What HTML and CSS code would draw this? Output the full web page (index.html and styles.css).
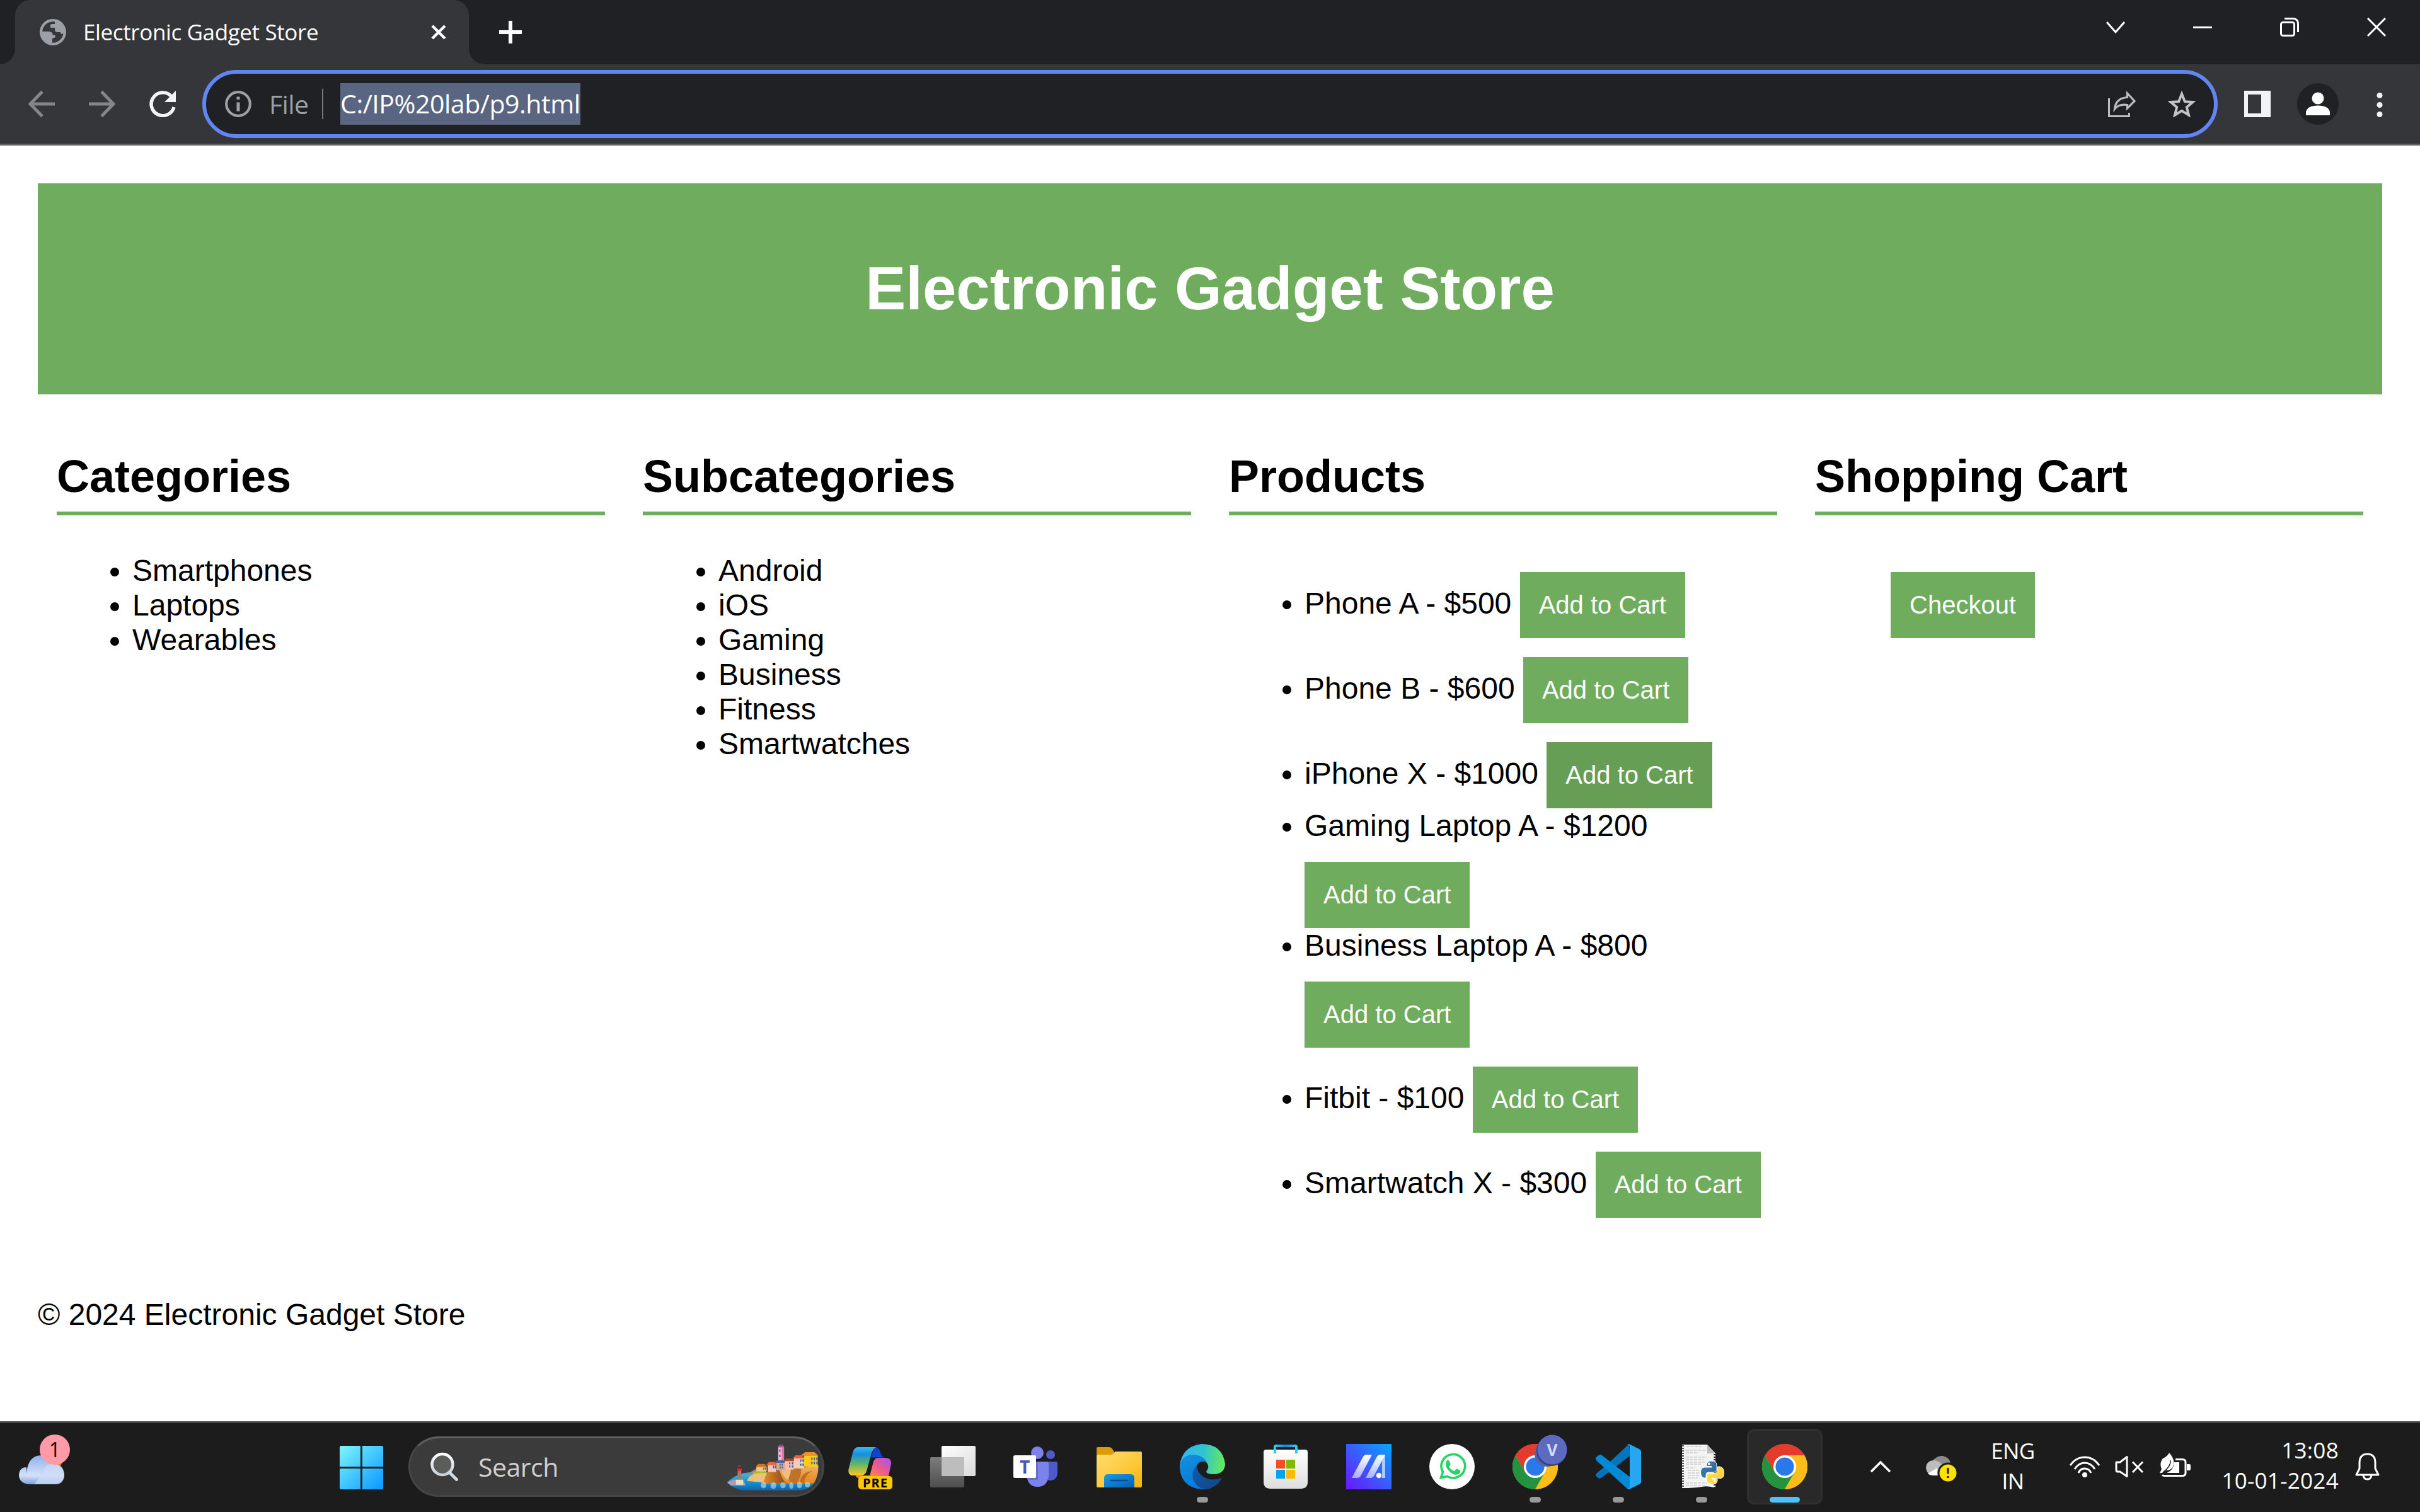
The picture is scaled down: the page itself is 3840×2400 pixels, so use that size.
FILE: index.html
```html
<!DOCTYPE html>
<html lang="en">
<head>
<meta charset="utf-8">
<title>Electronic Gadget Store</title>
<link rel="stylesheet" href="styles.css">
</head>
<body>
<svg class="defs" width="0" height="0" aria-hidden="true">
  <defs>
    <linearGradient id="win" x1="0" y1="0" x2="1" y2="1"><stop offset="0" stop-color="#7df6ff"/><stop offset="1" stop-color="#0a96ff"/></linearGradient>
    <linearGradient id="cloud" x1="0" y1="0" x2="0" y2="1"><stop offset="0" stop-color="#8fb1ee"/><stop offset=".7" stop-color="#d3e1f7"/><stop offset="1" stop-color="#7f9fe0"/></linearGradient>
    <linearGradient id="lens" x1="0" y1="0" x2="0" y2="1"><stop offset="0" stop-color="#fff"/><stop offset="1" stop-color="#c5d0da"/></linearGradient>
    <linearGradient id="sea" x1="0" y1="0" x2="0" y2="1"><stop offset="0" stop-color="#2fc4e4"/><stop offset="1" stop-color="#0562b4"/></linearGradient>
    <linearGradient id="cliff" x1="0" y1="0" x2="0" y2="1"><stop offset="0" stop-color="#e9b06e"/><stop offset="1" stop-color="#e8871b"/></linearGradient>
    <linearGradient id="cliffDark" x1="0" y1="0" x2="1" y2="0"><stop offset="0" stop-color="#e58c28"/><stop offset="1" stop-color="#8d4d1c"/></linearGradient>
    <linearGradient id="copA" x1="0" y1="0" x2="0" y2="1"><stop offset="0" stop-color="#3cb6f5"/><stop offset=".25" stop-color="#1590dc"/><stop offset=".55" stop-color="#52b276"/><stop offset="1" stop-color="#fcc91a"/></linearGradient>
    <linearGradient id="copB" x1="1" y1="0" x2="0" y2="1"><stop offset="0" stop-color="#9a57f5"/><stop offset=".5" stop-color="#ea5793"/><stop offset="1" stop-color="#ff8450"/></linearGradient>
    <linearGradient id="tvA" x1="0" y1="0" x2="1" y2="1"><stop offset="0" stop-color="#fff"/><stop offset="1" stop-color="#dadada"/></linearGradient>
    <linearGradient id="tvB" x1="0" y1="0" x2="0" y2="1"><stop offset="0" stop-color="#7d7d7d"/><stop offset="1" stop-color="#4e4e4e"/></linearGradient>
    <linearGradient id="folder" x1="0" y1="0" x2="1" y2="1"><stop offset="0" stop-color="#ffdd72"/><stop offset=".6" stop-color="#fdc838"/><stop offset="1" stop-color="#f5b20a"/></linearGradient>
    <linearGradient id="folderBlue" x1="0" y1="0" x2="1" y2="1"><stop offset="0" stop-color="#189be6"/><stop offset="1" stop-color="#0460b4"/></linearGradient>
    <linearGradient id="edgeTop" x1="0" y1=".4" x2="1" y2=".5"><stop offset="0" stop-color="#38b6f6"/><stop offset=".5" stop-color="#2ec3cf"/><stop offset="1" stop-color="#69ea5b"/></linearGradient>
    <linearGradient id="edgeLow" x1="0" y1="0" x2=".5" y2="1"><stop offset="0" stop-color="#1690dd"/><stop offset="1" stop-color="#0479d8"/></linearGradient>
    <linearGradient id="edgeDark" x1="0" y1="0" x2="1" y2="1"><stop offset="0" stop-color="#0b5cb0"/><stop offset="1" stop-color="#174482"/></linearGradient>
    <linearGradient id="store" x1="0" y1="0" x2="0" y2="1"><stop offset="0" stop-color="#fff"/><stop offset="1" stop-color="#dedede"/></linearGradient>
    <linearGradient id="handle" x1="0" y1="0" x2="1" y2="0"><stop offset="0" stop-color="#2bcdf8"/><stop offset=".5" stop-color="#1286e0"/><stop offset="1" stop-color="#2bcdf8"/></linearGradient>
    <linearGradient id="asus" x1="1" y1="0" x2="0" y2="1"><stop offset="0" stop-color="#04a8ff"/><stop offset=".5" stop-color="#3a5cff"/><stop offset="1" stop-color="#6a16ff"/></linearGradient>
    <linearGradient id="asusBar" x1="0" y1="0" x2="0" y2="1"><stop offset="0" stop-color="#fff"/><stop offset="1" stop-color="#fff" stop-opacity=".55"/></linearGradient>
    <linearGradient id="pyBlue" x1="0" y1="0" x2="1" y2="1"><stop offset="0" stop-color="#3d7fb8"/><stop offset="1" stop-color="#2f6594"/></linearGradient>
    <linearGradient id="pyYellow" x1="0" y1="0" x2="1" y2="1"><stop offset="0" stop-color="#ffe55c"/><stop offset="1" stop-color="#ffc92c"/></linearGradient>
    <clipPath id="bay"><path d="M40 253Q85 208 150 205L390 60H478V170Q474 290 385 291H130Q75 290 40 253Z"/></clipPath>
    <symbol id="chrome" viewBox="0 0 72 72">
      <circle cx="36" cy="36" r="36" fill="#f9bc15"/>
      <path d="M36 36L4.800 18A36 36 0 0 1 67.200 18H36Z" fill="#e33b2e"/>
      <path d="M20.400 45L4.800 18A36 36 0 0 0 36 72L51.600 45Z" fill="#23933f"/>
      <path d="M36 18H67.200A36 36 0 0 1 36 72L51.600 45Z" fill="#fbbd1a"/>
      <path d="M4.800 18L20.400 45L36 36V18Z" fill="#e33b2e"/>
      <circle cx="36" cy="36" r="18" fill="#fff"/><circle cx="36" cy="36" r="14.600" fill="#2b78ea"/>
    </symbol>
  </defs>
</svg>

<header class="browser">
  <div class="tabstrip">
    <div class="tab">
      <svg class="favicon" viewBox="0 0 42 42"><circle cx="21" cy="21" r="21" fill="#9aa0a6"/><path d="M24 4.500A17 17 0 0 0 4.200 20H14Q21 20 21 26H25Q25 31 20 31V36Q18 38 22 37.800A17 17 0 0 0 37.500 23Q35 25 33 23V21H28Q24 21 24 17V14H17V10Q17 8 20 8H24Z" fill="#35363a"/></svg>
      <span class="tab-title">Electronic Gadget Store</span>
      <svg class="tab-close" viewBox="0 0 24 24"><path d="M2 2L22 22M22 2L2 22" stroke="#fff" stroke-width="4.500"/></svg>
    </div>
    <svg class="new-tab" viewBox="0 0 36 36"><path d="M18 0V36M0 18H36" stroke="#fff" stroke-width="6"/></svg>
    <div class="window-controls">
      <svg viewBox="0 0 30 30"><path d="M1 7L15 23L29 7" fill="none" stroke="#fff" stroke-width="3"/></svg>
      <svg viewBox="0 0 30 30"><path d="M0 15.500H30" stroke="#fff" stroke-width="3"/></svg>
      <svg viewBox="0 0 30 30"><rect x="1.500" y="7.500" width="21" height="21" rx="3" fill="none" stroke="#fff" stroke-width="3"/><path d="M7 1.500H20Q28.500 1.500 28.500 10V23" fill="none" stroke="#fff" stroke-width="3"/></svg>
      <svg viewBox="0 0 30 30"><path d="M1 1L29 29M29 1L1 29" stroke="#fff" stroke-width="3"/></svg>
    </div>
  </div>
  <div class="toolbar">
    <svg class="nav" viewBox="0 0 42 42"><path d="M42 21H4M22 1.500L3 21L22 40.500" fill="none" stroke="#85868a" stroke-width="5"/></svg>
    <svg class="nav" viewBox="0 0 42 42"><path d="M0 21H38M20 1.500L39 21L20 40.500" fill="none" stroke="#85868a" stroke-width="5"/></svg>
    <svg class="nav" viewBox="0 0 42 42"><path d="M34.500 8.500A18.300 18.300 0 1 0 39 26" fill="none" stroke="#f1f3f4" stroke-width="5.400"/><path d="M42 0V18H24Z" fill="#f1f3f4"/></svg>
    <div class="omnibox">
      <svg class="info" viewBox="0 0 42 42"><circle cx="21" cy="21" r="18.800" fill="none" stroke="#9aa0a6" stroke-width="4.200"/><path d="M21 18.500V32.500M21 9.500V14" stroke="#9aa0a6" stroke-width="5"/></svg>
      <span class="scheme">File</span>
      <span class="divider"></span>
      <span class="url">C:/IP%20lab/p9.html</span>
      <svg class="share" viewBox="0 0 44 42"><path d="M1.500 12V40.500H33.500V35" fill="none" stroke="#bdbdbd" stroke-width="3"/><path d="M30.500 4L42 16.500L30.500 28V22.500Q17 20.500 10.500 29Q12 12 30.500 10.500Z" fill="none" stroke="#bdbdbd" stroke-width="3.200"/></svg>
      <svg class="star" viewBox="0 0 44 42"><path d="M22 5L26.800 17.200L39.500 18L29.800 26.300L33 38.600L22 31.800L11 38.600L14.200 26.300L4.500 18L17.200 17.200Z" fill="none" stroke="#c3c3c3" stroke-width="4"/></svg>
    </div>
    <svg class="panel" viewBox="0 0 42 42"><path d="M0 0H42V42H0ZM6 6V36H27V6Z" fill="#f1f3f4" fill-rule="evenodd"/></svg>
    <svg class="avatar" viewBox="0 0 66 66"><circle cx="33" cy="33" r="33" fill="#202124"/><circle cx="33" cy="24" r="9.500" fill="#fff"/><path d="M14 51V46Q16 35.500 33 35.500T52 46V51Z" fill="#fff"/></svg>
    <svg class="menu" viewBox="0 0 10 42"><g fill="#f1f3f4"><circle cx="5" cy="7.500" r="4.500"/><circle cx="5" cy="22.500" r="4.500"/><circle cx="5" cy="37.500" r="4.500"/></g></svg>
  </div>
</header>

<main class="page">
  <header class="banner"><h1>Electronic Gadget Store</h1></header>
  <div class="columns">
    <section class="column">
      <h2>Categories</h2>
      <ul><li>Smartphones</li><li>Laptops</li><li>Wearables</li></ul>
    </section>
    <section class="column">
      <h2>Subcategories</h2>
      <ul><li>Android</li><li>iOS</li><li>Gaming</li><li>Business</li><li>Fitness</li><li>Smartwatches</li></ul>
    </section>
    <section class="column">
      <h2>Products</h2>
      <ul>
        <li>Phone A - $500 <button>Add to Cart</button></li>
        <li>Phone B - $600 <button>Add to Cart</button></li>
        <li>iPhone X - $1000 <button class="hovered">Add to Cart</button></li>
        <li>Gaming Laptop A - $1200 <button>Add to Cart</button></li>
        <li>Business Laptop A - $800 <button>Add to Cart</button></li>
        <li>Fitbit - $100 <button>Add to Cart</button></li>
        <li>Smartwatch X - $300 <button>Add to Cart</button></li>
      </ul>
    </section>
    <section class="column">
      <h2>Shopping Cart</h2>
      <ul><button>Checkout</button></ul>
    </section>
  </div>
  <footer><p>© 2024 Electronic Gadget Store</p></footer>
</main>

<nav class="taskbar">
  <div class="weather">
    <svg viewBox="0 0 72 72"><circle cx="52" cy="22" r="17" fill="#f07a0c"/><path d="M34 22Q34 14 40 10L44 22Z" fill="#f9bd2c"/><path d="M12 44Q14 15 36 15Q50 15 55 28Q72 32 72 48Q70 61 58 61H14Q0 58 0 46Q1 34 12 34Z" fill="url(#cloud)"/><path d="M40 42Q40 28 57 28Q71 30 72 46Q70 61 57 61H24" fill="#cfdef8" opacity=".7"/></svg>
    <span class="weather-badge">1</span>
  </div>
  <div class="task start"><svg viewBox="0 0 69 69"><path d="M2 0H33V33H0V2Q0 0 2 0ZM36 0H67Q69 0 69 2V33H36ZM0 36H33V69H2Q0 69 0 67ZM36 36H69V67Q69 69 67 69H36Z" fill="url(#win)"/></svg></div>
  <div class="search">
    <svg class="lens" viewBox="0 0 44 46"><circle cx="19" cy="19.500" r="16.500" fill="#5c5c5c" stroke="url(#lens)" stroke-width="4.500"/><path d="M30 32L41.500 43.500" stroke="#d3dbe2" stroke-width="4.800" stroke-linecap="round"/></svg>
    <span>Search</span>
    <svg class="art" viewBox="40 60 440 235">
      <g clip-path="url(#bay)">
        <path d="M40 205H480V295H40Z" fill="url(#sea)"/>
        <path d="M108 206L150 190L185 185V215H115Z" fill="#8c87ab"/>
        <path d="M40 253L70 240H110L130 262L125 268H60Z" fill="#b29cb5"/>
        <path d="M135 245Q150 212 190 208L260 205V256Q170 250 135 245Z" fill="#edc07c"/>
        <path d="M212 258L230 205L330 190L480 172V258Z" fill="url(#cliff)"/>
        <path d="M212 257L232 206L292 196Q300 230 322 257Z" fill="url(#cliffDark)"/>
        <path d="M345 190L395 184Q398 225 372 257H350Q325 240 345 190Z" fill="#bb7428"/>
        <path d="M300 194L345 188Q348 215 328 240Q305 220 300 194Z" fill="#efbd80"/>
        <path d="M390 250Q395 205 450 198Q415 212 408 257Z" fill="#c46b1c"/>
        <g fill="#fff" opacity=".45"><ellipse cx="215" cy="266" rx="13" ry="15"/><ellipse cx="262" cy="268" rx="14" ry="16"/><ellipse cx="308" cy="266" rx="13" ry="15"/><ellipse cx="348" cy="268" rx="10" ry="16"/><ellipse cx="387" cy="266" rx="12" ry="15"/><ellipse cx="425" cy="264" rx="12" ry="12"/></g>
        <path d="M162 213Q165 198 195 196H225L229 206Q195 207 162 213Z" fill="#a5c51c"/>
      </g>
      <path d="M285 85H313V150H285Z" fill="#f6b8d4"/><path d="M302 85H313V150H302Z" fill="#e26fa5"/><path d="M282 85L292 73H305L314 85Z" fill="#cf5f92"/><circle cx="299" cy="75" r="6" fill="#5546a5"/>
      <path d="M181 178H230V200H181Z" fill="#f1c98e"/><path d="M177 179L190 165H220L232 179Z" fill="#cf791c"/>
      <path d="M235 168H275V203H235Z" fill="#f9c7b8"/><path d="M228 170L240 155H270L281 170Z" fill="#ee6340"/>
      <path d="M276 158H316V195H276Z" fill="#dba68b"/><path d="M268 158L280 147H308L318 158Z" fill="#3768ad"/>
      <path d="M316 150H360V192H316Z" fill="#f8bdb0"/><path d="M309 151L322 139H352L364 151Z" fill="#a44d2c"/>
      <path d="M360 137H408V186H360Z" fill="#fbcabb"/><path d="M354 138L367 123H398L410 138Z" fill="#ed6039"/>
      <path d="M408 124H474V178H408Z" fill="#fccb1c"/><path d="M392 125L414 108H458L474 122V125Z" fill="#ea912b"/>
      <g fill="#35659b"><path d="M290 95h6v12h-6zM290 120h6v12h-6zM214 182h5v10h-5zM222 182h5v10h-5zM260 172h6v14h-6zM270 172h6v14h-6zM292 163h5v9h-5zM302 163h5v9h-5zM292 177h5v9h-5zM302 177h5v9h-5zM337 157h6v9h-6zM350 157h6v9h-6zM337 172h6v9h-6zM350 172h6v9h-6zM390 143h6v11h-6zM401 143h6v11h-6zM390 163h6v11h-6zM401 163h6v11h-6zM443 134h6v12h-6zM455 134h6v12h-6zM467 134h6v12h-6zM443 154h6v12h-6zM455 154h6v12h-6zM467 154h6v12h-6z"/></g>
      <path d="M92 195H108L111 245H89Z" fill="#a47a70"/><path d="M90 185H111V198H90Z" fill="#e5202b"/><path d="M94 175H107V187H94Z" fill="#403a45"/><path d="M92 177Q99 165 109 177Z" fill="#e5202b"/><path d="M83 240H118V264H83Z" fill="#eddcc4"/>
    </svg>
  </div>
  <div class="apps">
    <div class="task"><svg viewBox="0 0 72 72"><path d="M44 5Q50 5 53 13Q55 21 60 21.500H38Z" fill="#1044cc"/><path d="M14 50H37L36 54H18Q14 54 14 50Z" fill="#f4714f"/><path d="M50 22H62Q72 23 69.500 34L66 51H36L42 28Q44 22 50 22Z" fill="url(#copB)"/><path d="M18 5H46Q41 7 38 18L31 43Q29 50 22 50H8Q1 49 2.500 40L9 14Q11 5 18 5Z" fill="url(#copA)"/><rect x="18" y="51" width="54" height="21" rx="5" fill="#ffc800"/></svg><b class="pre">PRE</b></div>
    <div class="task"><svg viewBox="0 0 72 72"><rect x="18" y="3" width="54" height="48" rx="2" fill="url(#tvA)"/><rect y="21" width="54" height="48" rx="2" fill="url(#tvB)"/><path d="M18 21H54V51H18Z" fill="#bdbdbd"/></svg></div>
    <div class="task"><svg viewBox="0 0 72 72"><circle cx="38" cy="14" r="10" fill="#7b83eb"/><circle cx="59" cy="17" r="7" fill="#5059c9"/><path d="M50 28H68Q70 28 70 30V46Q69 58 58 58Q52 58 50 52Z" fill="#5059c9"/><path d="M21 28H53Q56 28 56 31V50Q54 68 38.500 68T21 50Z" fill="#7b83eb"/><path d="M24 28H39V57H24Z" fill="#5a62bb" opacity=".6"/><rect y="18" width="36" height="36" rx="2.500" fill="#fff"/></svg><b class="teams-t">T</b></div>
    <div class="task"><svg viewBox="0 0 72 72"><path d="M0 7Q0 5 2 5H20Q23 5 25 8L29 14V24H0Z" fill="#dd9c03"/><path d="M0 20Q0 17 3 17H22Q26 17 28 14T32 12H70Q72 12 72 14V67Q72 69 70 69H2Q0 69 0 67Z" fill="url(#folder)"/><path d="M12 69V54Q12 48 18 48H54Q60 48 60 54V69Z" fill="url(#folderBlue)"/><path d="M22 58H49" stroke="#0c4a8c" stroke-width="2.500" stroke-linecap="round"/></svg></div>
    <div class="task running"><svg viewBox="0 0 72 72"><path d="M0 34Q4 4 34 0Q68 0 72 32Q71 48 53 48Q43 48 42 44Q48 36 43 30Q36 22 20 24Q6 26 0 40Z" fill="url(#edgeTop)"/><path d="M0 37Q2 18 20 17Q36 17 43 29Q29 24 26 38Q24 54 50 70Q44 72 36 72Q2 70 0 37Z" fill="url(#edgeLow)"/><path d="M27 34Q14 48 26 64Q32 72 42 71.500Q60 69 66.500 54Q50 60 37 52Q27 44 27 34Z" fill="url(#edgeDark)"/></svg></div>
    <div class="task"><svg viewBox="0 0 72 72"><path d="M5 9H67Q71 9 71 13V60Q71 71 60 71H12Q1 71 1 60V13Q1 9 5 9Z" fill="url(#store)"/><path d="M19 15V5Q19 3 21 3H51Q53 3 53 5V15" fill="none" stroke="url(#handle)" stroke-width="4"/><path d="M21 25h14v14h-14z" fill="#f34f24"/><path d="M37 25h14v14h-14z" fill="#7fb900"/><path d="M21 41h14v14h-14z" fill="#03a3ef"/><path d="M37 41h14v14h-14z" fill="#feb902"/></svg></div>
    <div class="task"><svg viewBox="0 0 72 72"><path d="M0 0H72V72H0Z" fill="url(#asus)"/><path d="M57 17H62V54H57Z" fill="#a9ccff"/><path d="M9 54L27 20Q29 17 32 17H41L23 51Q21 54 18 54ZM31 54L49 20Q51 17 54 17H62L44 51Q42 54 39 54Z" fill="url(#asusBar)"/><circle cx="52" cy="50" r="4.200" fill="#fff"/></svg></div>
    <div class="task"><svg viewBox="0 0 72 72"><circle cx="36" cy="36" r="36" fill="#fff"/><path d="M18.500 53.500L21.500 44.500A18.800 18.800 0 1 1 28.500 51.500Z" fill="none" stroke="#25d366" stroke-width="3.600"/><path d="M28 26Q31 25 32 28L33.500 32Q33.500 34 31 36Q35 42 40 43Q42 39 44 39.500L49 42Q50 46 46 48Q39 51 31.500 43Q23 35 27.500 27Z" fill="#25d366"/></svg></div>
    <div class="task running"><svg viewBox="0 0 72 72"><use href="#chrome"/><circle cx="55" cy="16" r="20" fill="#5361b4"/><circle cx="62" cy="11" r="24" fill="#374080"/><circle cx="63" cy="9" r="23.500" fill="#5c6bc0"/></svg><b class="profile">V</b></div>
    <div class="task running"><svg viewBox="0 0 72 72"><path d="M53 0L15 35.500L3 45Q0 48 0 50Q3 54 6 55L10 53L54 19Z" fill="#0475bc"/><path d="M7 17Q3 18 0 22Q-1 25 3 28L50 71Q52 73 55 71V53L10 18Q9 17 7 17Z" fill="#0489d6"/><path d="M50 1Q52 0 54 .5L69 8Q72 9.500 72 12V60Q72 63 69 64L54 71.500Q51 72 50 70Q54 71 54 67V5Q54 1 50 1Z" fill="#25a7f2"/></svg></div>
    <div class="task running"><svg viewBox="0 0 72 72"><path d="M5 1H45L58 15V70Q48 66 36 68T5 70Z" fill="#f3f3f3"/><path d="M45 1L58 15H45Z" fill="#bdbdbd"/><path d="M6.500 2V70M56.500 16V70" stroke="#252525" stroke-width="2.500" stroke-dasharray="2 2"/><path d="M12 4h26M11 10h32M11 14h20M11 21h34M11 25h28M11 29h32M11 32h24M11 38h14M14 42h20M14 46h20M14 50h18M14 54h16M11 62h34M11 66h30" stroke="#bcbcbc" stroke-width="1.200" stroke-dasharray="5 1.500"/><path d="M52 27Q60 27 60 33V41Q60 45 56 45H47Q43 45 43 49V54H40Q34.500 52 34.500 45T40 37H52V35.500H44V33Q44 27 52 27Z" fill="url(#pyBlue)" stroke="#fff" stroke-width="1"/><path d="M54 63.500Q44 63.500 44 57V50Q44 46.500 48 46.500H57Q61.500 46 61.500 42V36H65Q71.500 37 71.500 46T65 54.500H53V56H61V58Q61 63.500 54 63.500Z" fill="url(#pyYellow)" stroke="#fff" stroke-width="1"/><circle cx="47.800" cy="31.500" r="2" fill="#fff"/><circle cx="57" cy="58.500" r="2" fill="#fff"/></svg></div>
    <div class="task running active"><svg viewBox="0 0 72 72"><use href="#chrome"/></svg></div>
  </div>
  <div class="tray">
    <svg class="t-chevron" viewBox="0 0 34 20"><path d="M2 18L17 3L32 18" fill="none" stroke="#fff" stroke-width="3.500"/></svg>
    <svg class="t-drive" viewBox="0 0 49 42"><path d="M10 9Q18 0 27 1Q36 3 39 11L24 22Z" fill="#8b8b8b"/><path d="M0 20Q1 8 13 8Q20 9 24 13L30 18L22 32H12Q1 30 0 20Z" fill="#bcbcbc"/><path d="M3 29L18 20V32H12Q6 32 3 29Z" fill="#fff"/><circle cx="35" cy="28" r="16.500" fill="#1c1c1c"/><circle cx="35" cy="28" r="13.500" fill="#fbe100"/><path d="M35 20V29.500M35 33V36" stroke="#222" stroke-width="3.200"/></svg>
    <div class="lang">ENG<br>IN</div>
    <svg class="t-wifi" viewBox="0 0 50 36"><g fill="none" stroke="#fff" stroke-width="3"><path d="M2 16Q11 3 25 3T48 16"/><path d="M9 22Q15 12 25 12T41 22"/><path d="M15 28Q18 21 25 21T35 28"/></g><circle cx="25" cy="31" r="4" fill="#fff"/></svg>
    <svg class="t-sound" viewBox="0 0 48 36"><path d="M3 11H9L20 2.500V33.500L9 26H5Q3 26 3 23Z" fill="none" stroke="#fff" stroke-width="3" stroke-linejoin="round"/><path d="M29 10.500L45 27M45 10.500L29 27" stroke="#fff" stroke-width="3"/></svg>
    <svg class="t-battery" viewBox="0 0 50 40"><path d="M15 1Q24 11 22 20Q20 29 10 29Q4 34 0 33L3 27Q-1 17 5 10Q12 7 15 1Z" fill="#fff"/><path d="M17 13Q18 23 5 32" fill="none" stroke="#1c1c1c" stroke-width="1.500"/><path d="M25 11.500H36Q41 11.500 41 16V33Q41 37.500 36 37.500H8Q5 37.500 4 36" fill="none" stroke="#fff" stroke-width="3"/><path d="M23 16H31V33H11Q22 29 23 16ZM43 19H47Q49 19 49 21V27Q49 29 47 29H43Z" fill="#fff"/></svg>
    <div class="clock">13:08<br>10-01-2024</div>
    <svg class="t-bell" viewBox="0 0 41 44"><path d="M8 16Q8 2 20.500 2T33 16V25L38 35H3L8 25Z" fill="none" stroke="#fff" stroke-width="3" stroke-linejoin="round"/><path d="M14 36Q15 42 20.500 42T27 36" fill="none" stroke="#fff" stroke-width="3"/></svg>
  </div>
</nav>
</body>
</html>
```
FILE: styles.css
```css
* { box-sizing: border-box; }
body {
  margin: 0;
  width: 3840px;
  height: 2400px;
  overflow: hidden;
  display: flex;
  flex-direction: column;
  background: #fff;
  color: #000;
  font: 48px/55px "Liberation Sans", Arial, sans-serif;
}
svg { display: block; flex: none; }
.defs { position: absolute; }

/* Browser frame */
.browser { height: 231px; background: #35363a; border-bottom: 3px solid #5f6066; font-family: "Open Sans", "Noto Sans", sans-serif; flex: none; }
.tabstrip { height: 102px; background: #202124; display: flex; align-items: center; padding-left: 24px; }
.tab { position: relative; width: 720px; height: 102px; padding: 0 36px 0 39px; background: #35363a; border-radius: 24px 24px 0 0; display: flex; align-items: center; }
.tab::before, .tab::after { content: ""; position: absolute; bottom: 0; width: 24px; height: 24px; }
.tab::before { left: -24px; background: radial-gradient(circle at 0 0, transparent 23.5px, #35363a 24px); }
.tab::after { right: -24px; background: radial-gradient(circle at 100% 0, transparent 23.5px, #35363a 24px); }
.favicon { width: 42px; height: 42px; }
.tab-title { flex: 1; margin-left: 27px; padding-bottom: 2px; color: #fff; font-size: 35px; letter-spacing: -0.38px; white-space: nowrap; }
.tab-close { width: 24px; height: 24px; }
.new-tab { width: 36px; height: 36px; margin-left: 48px; }
.window-controls { margin-left: auto; margin-right: 54px; display: flex; gap: 108px; transform: translateY(-8px); }
.window-controls svg { width: 30px; height: 30px; }
.toolbar { height: 126px; display: flex; align-items: center; padding-left: 45px; }
.nav { width: 42px; height: 42px; margin-right: 54px; }
.nav:nth-of-type(3) { margin-right: 42px; }
.omnibox { width: 3198px; height: 108px; border: 6px solid #6285f1; border-radius: 54px; background: #202124; display: flex; align-items: center; padding: 0 29px 0 30px; font-size: 41px; }
.info { width: 42px; height: 42px; }
.scheme { margin-left: 28px; width: 84px; color: #9aa0a6; letter-spacing: -0.6px; }
.divider { width: 2px; height: 48px; background: #75777b; }
.url { margin-left: 27px; height: 66px; width: 381px; line-height: 64px; background: #5a6582; color: #fff; letter-spacing: -0.45px; white-space: nowrap; }
.share { width: 44px; height: 42px; margin-left: auto; }
.star { width: 44px; height: 42px; margin-left: 51px; }
.panel { width: 42px; height: 42px; margin-left: 42px; }
.avatar { width: 66px; height: 66px; margin-left: 42px; }
.menu { width: 10px; height: 42px; margin-left: 60px; }

/* Store page */
.page { flex: 1; padding: 60px; min-height: 0; }
.banner { background: #6fac5d; color: #fff; text-align: center; padding: 48px; }
h1 { margin: 64.32px 0; font-size: 96px; line-height: 110px; }
.columns { display: grid; grid-template-columns: repeat(4, 1fr); }
.column { padding: 30px; }
h2 { margin: 59.76px 0; padding-bottom: 15px; font-size: 72px; line-height: 82px; border-bottom: 6px solid #6fac5d; }
ul { margin: 48px 0; padding-left: 120px; }
h2 + ul { margin-top: 0; }
button { margin: 30px 0 0; padding: 30px; border: 0; border-radius: 0; background: #6fac5d; color: #fff; font: 40px/45px "Liberation Sans", Arial, sans-serif; }
.hovered { background: #669e55; }
footer p { margin: 48px 0; }

/* Taskbar */
.taskbar { height: 144px; flex: none; background: #1c1c1c; box-shadow: inset 0 3px 0 #444; display: flex; align-items: center; font-family: "Open Sans", "Noto Sans", sans-serif; color: #fff; }
.weather { position: relative; width: 513px; padding-left: 30px; }
.weather svg { width: 72px; height: 72px; margin-top: 5px; }
.weather-badge { position: absolute; left: 63px; top: -13px; width: 48px; height: 48px; border-radius: 50%; background: #ff9aa6; color: #000; font-size: 32px; line-height: 48px; text-align: center; }
.task { position: relative; width: 120px; height: 120px; display: flex; align-items: center; justify-content: center; border-radius: 12px; }
.task svg { width: 72px; height: 72px; overflow: visible; }
.start svg { width: 69px; height: 69px; margin-top: 3px; }
.running::after { content: ""; position: absolute; left: 51px; bottom: 3px; width: 18px; height: 9px; border-radius: 5px; background: #999; }
.active { background: #292929; box-shadow: inset 0 0 0 3px #303030; }
.active::after { left: 36px; width: 48px; background: #4cc2ff; }
.apps { display: flex; gap: 12px; margin-left: 12px; }
.search { position: relative; width: 660px; height: 96px; margin-left: 15px; border: 3px solid #464646; border-top-color: #606060; border-radius: 48px; background: #3b3b3b; display: flex; align-items: center; padding-left: 32px; color: #cfcfcf; font-size: 41px; }
.lens { width: 44px; height: 46px; }
.search span { margin-left: 32px; letter-spacing: -0.5px; }
.art { width: 147px; height: 78px; margin-left: auto; margin-right: 5px; }
.pre, .teams-t, .profile { position: absolute; text-align: center; }
.pre { left: 42px; top: 75px; width: 54px; font-size: 20px; line-height: 21px; letter-spacing: 1px; color: #000; }
.teams-t { left: 24px; top: 42px; width: 36px; font-size: 28px; line-height: 36px; color: #4b53bc; }
.profile { left: 63px; top: 9px; width: 48px; font-size: 26px; line-height: 48px; color: #d5daf2; }
.tray { flex: 1; display: flex; align-items: center; font-size: 35px; line-height: 48px; }
.t-chevron { width: 34px; height: 20px; margin-left: 75px; }
.t-drive { width: 49px; height: 42px; margin-left: 55px; margin-top: 6px; }
.lang { width: 78px; margin-left: 50px; padding-bottom: 2px; text-align: center; letter-spacing: -0.6px; }
.t-wifi { width: 50px; height: 36px; margin-left: 50px; }
.t-sound { width: 48px; height: 36px; margin-left: 22px; }
.t-battery { width: 50px; height: 40px; margin-left: 24px; margin-top: -6px; }
.clock { width: 234px; padding-bottom: 5px; text-align: right; letter-spacing: 0.3px; white-space: nowrap; }
.t-bell { width: 41px; height: 44px; margin-left: 25px; }
```
